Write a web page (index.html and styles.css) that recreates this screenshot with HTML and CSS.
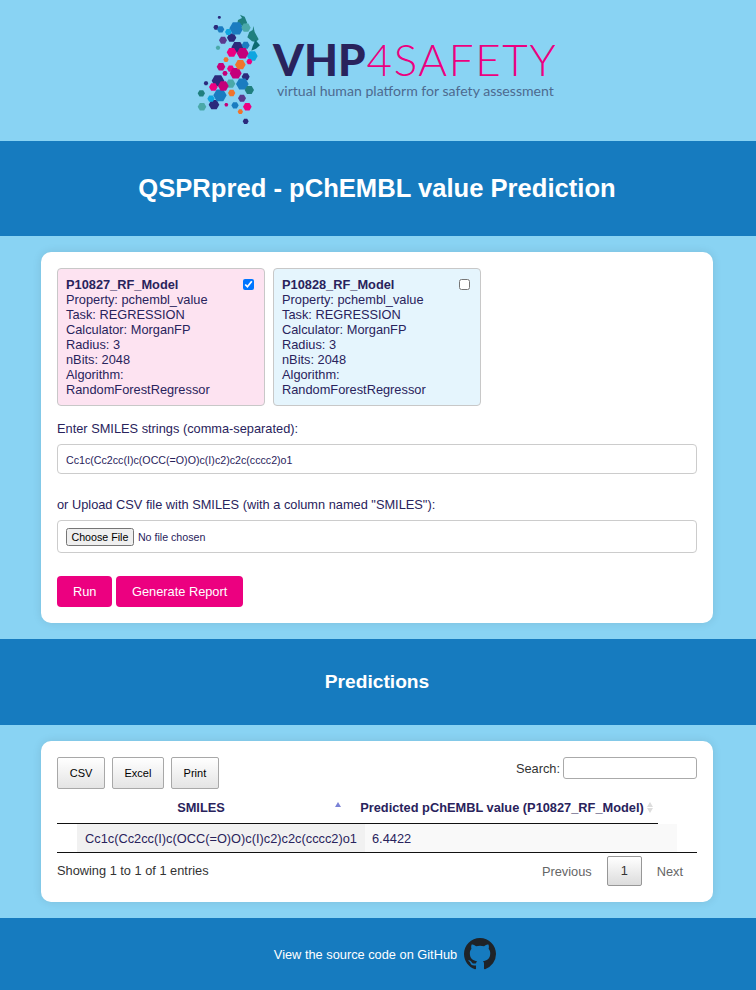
FILE: index.html
```html
<!DOCTYPE html>
<html lang="en">
<head>
  <meta charset="UTF-8">
  <meta name="viewport" content="width=device-width, initial-scale=1.0">
  <title>QSPRpred - pChEMBL value Prediction</title>
  <link rel="stylesheet" href="styles.css">
</head>
<body>
  <header class="logo-bar">
    <div class="logo">
      <svg class="logo-mark" viewBox="0 0 270 360" aria-hidden="true">
        <defs>
          <polygon id="hex" points="1,0 0.5,0.87 -0.5,0.87 -1,0 -0.5,-0.87 0.5,-0.87"/>
        </defs>
        <path fill="#1f7f7e" d="M150 14l14 6 8 20-14 8-16-8 2-10 12-6z"/>
        <path fill="#1f7f7e" d="M190 48l4 18 12 22-8 8-12-2-14-12 6-16 10-6z"/>
        <path fill="#0c6a70" d="M196 90l14 16-12 10-14 6 4-14z"/>
        <g fill="#2b2a7c">
          <use href="#hex" transform="translate(88 22) scale(5)"/>
          <use href="#hex" transform="translate(78 52) scale(8)"/>
          <use href="#hex" transform="translate(125 83) scale(14)"/>
          <use href="#hex" transform="translate(142 112) scale(18)"/>
          <use href="#hex" transform="translate(167 200) scale(12)"/>
          <use href="#hex" transform="translate(48 220) scale(7)"/>
          <use href="#hex" transform="translate(84 212) scale(19)"/>
          <use href="#hex" transform="translate(72 284) scale(16)"/>
          <use href="#hex" transform="translate(167 334) scale(9)"/>
        </g>
        <g fill="#1a7cc0">
          <use href="#hex" transform="translate(92 58) scale(11)"/>
          <use href="#hex" transform="translate(139 55) scale(21)"/>
          <use href="#hex" transform="translate(167 106) scale(12)"/>
          <use href="#hex" transform="translate(157 222) scale(19)"/>
          <use href="#hex" transform="translate(90 256) scale(20)"/>
          <use href="#hex" transform="translate(135 286) scale(11)"/>
        </g>
        <g fill="#4aa9a9">
          <use href="#hex" transform="translate(168 53) scale(14)"/>
          <use href="#hex" transform="translate(84 113) scale(7)"/>
          <use href="#hex" transform="translate(122 221) scale(14)"/>
          <use href="#hex" transform="translate(36 290) scale(13)"/>
        </g>
        <g fill="#1f7f7e">
          <use href="#hex" transform="translate(178 240) scale(14)"/>
          <use href="#hex" transform="translate(34 250) scale(11)"/>
        </g>
        <g fill="#0fa5e0">
          <use href="#hex" transform="translate(115 66) scale(10)"/>
          <use href="#hex" transform="translate(187 138) scale(16)"/>
          <use href="#hex" transform="translate(63 266) scale(11)"/>
        </g>
        <g fill="#5a3a8e">
          <use href="#hex" transform="translate(99 91) scale(12)"/>
          <use href="#hex" transform="translate(156 265) scale(12)"/>
        </g>
        <g fill="#ec0080">
          <use href="#hex" transform="translate(125 127) scale(15)"/>
          <use href="#hex" transform="translate(178 155) scale(9)"/>
          <use href="#hex" transform="translate(70 231) scale(13)"/>
          <use href="#hex" transform="translate(172 290) scale(13)"/>
          <use href="#hex" transform="translate(122 176) scale(11)"/>
        </g>
        <g fill="#c4007a">
          <use href="#hex" transform="translate(158 130) scale(18)"/>
          <use href="#hex" transform="translate(93 170) scale(13)"/>
          <use href="#hex" transform="translate(105 190) scale(8)"/>
          <use href="#hex" transform="translate(137 190) scale(18)"/>
          <use href="#hex" transform="translate(100 228) scale(16)"/>
          <use href="#hex" transform="translate(109 284) scale(6)"/>
        </g>
        <g fill="#f0742b">
          <use href="#hex" transform="translate(108 149) scale(8)"/>
          <use href="#hex" transform="translate(151 164) scale(16)"/>
          <use href="#hex" transform="translate(125 249) scale(11)"/>
          <use href="#hex" transform="translate(151 305) scale(8)"/>
        </g>
      </svg>
      <div class="logo-text">
        <div class="logo-name"><b>VHP</b><span class="logo-num">4SAFETY</span></div>
        <div class="logo-tagline">virtual human platform for safety assessment</div>
      </div>
    </div>
  </header>

  <section class="band band-title">
    <h1>QSPRpred - pChEMBL value Prediction</h1>
  </section>

  <main class="panel">
    <div class="models">
      <div class="model model-pink">
        <div class="model-head">
          <strong>P10827_RF_Model</strong>
          <input type="checkbox" checked>
        </div>
        <div>Property: pchembl_value</div>
        <div>Task: REGRESSION</div>
        <div>Calculator: MorganFP</div>
        <div>Radius: 3</div>
        <div>nBits: 2048</div>
        <div>Algorithm: RandomForestRegressor</div>
      </div>
      <div class="model model-blue">
        <div class="model-head">
          <strong>P10828_RF_Model</strong>
          <input type="checkbox">
        </div>
        <div>Property: pchembl_value</div>
        <div>Task: REGRESSION</div>
        <div>Calculator: MorganFP</div>
        <div>Radius: 3</div>
        <div>nBits: 2048</div>
        <div>Algorithm: RandomForestRegressor</div>
      </div>
    </div>

    <label class="field-label">Enter SMILES strings (comma-separated):</label>
    <input class="field field-text" type="text" value="Cc1c(Cc2cc(I)c(OCC(=O)O)c(I)c2)c2c(cccc2)o1">

    <label class="field-label field-label-second">or Upload CSV file with SMILES (with a column named "SMILES"):</label>
    <input class="field field-file" type="file">

    <div class="actions">
      <button class="btn-pink btn-run">Run</button>
      <button class="btn-pink btn-report">Generate Report</button>
    </div>
  </main>

  <section class="band band-sub">
    <h2>Predictions</h2>
  </section>

  <section class="panel panel-table">
    <div class="dt-top">
      <div class="dt-buttons">
        <button class="dt-btn">CSV</button>
        <button class="dt-btn">Excel</button>
        <button class="dt-btn">Print</button>
      </div>
      <label class="dt-search">Search: <input type="search"></label>
    </div>

    <div class="dt-head">
      <div class="th th-smiles">SMILES<span class="sort-up"></span></div>
      <div class="th th-value">Predicted pChEMBL value (P10827_RF_Model)<span class="sort-both"></span></div>
    </div>
    <div class="dt-body">
      <div class="td td-smiles">Cc1c(Cc2cc(I)c(OCC(=O)O)c(I)c2)c2c(cccc2)o1</div>
      <div class="td td-value">6.4422</div>
    </div>

    <div class="dt-bottom">
      <div class="dt-info">Showing 1 to 1 of 1 entries</div>
      <div class="dt-pages">
        <span class="page-link">Previous</span>
        <span class="page-current">1</span>
        <span class="page-link">Next</span>
      </div>
    </div>
  </section>

  <footer class="band band-footer">
    <span>View the source code on GitHub</span>
    <svg class="gh-icon" viewBox="0 0 16 16" aria-hidden="true">
      <path fill="#1f2328" d="M8 0C3.58 0 0 3.58 0 8c0 3.54 2.29 6.53 5.47 7.59.4.07.55-.17.55-.38 0-.19-.01-.82-.01-1.49-2.01.37-2.53-.49-2.69-.94-.09-.23-.48-.94-.82-1.13-.28-.15-.68-.52-.01-.53.63-.01 1.08.58 1.23.82.72 1.21 1.87.87 2.33.66.07-.52.28-.87.51-1.07-1.78-.2-3.64-.89-3.64-3.95 0-.87.31-1.59.82-2.15-.08-.2-.36-1.02.08-2.12 0 0 .67-.21 2.2.82.64-.18 1.32-.27 2-.27.68 0 1.36.09 2 .27 1.53-1.04 2.2-.82 2.2-.82.44 1.1.16 1.92.08 2.12.51.56.82 1.27.82 2.15 0 3.07-1.87 3.75-3.65 3.95.29.25.54.73.54 1.48 0 1.07-.01 1.93-.01 2.2 0 .21.15.46.55.38A8.013 8.013 0 0016 8c0-4.42-3.58-8-8-8z"/>
    </svg>
  </footer>
</body>
</html>
```

FILE: styles.css
```css
body {
  margin: 0;
  background-color: #89d3f3;
  color: #29235c;
  font-family: "Liberation Sans", Arial, sans-serif;
  font-size: 12.8px;
  line-height: 15px;
}

/* logo */
.logo-bar {
  height: 141px;
  display: flex;
  box-sizing: border-box;
  padding: 10px 0 0 190px;
}
.logo {
  display: flex;
  height: 120px;
}
.logo-mark {
  width: 90px;
  height: 120px;
  flex-shrink: 0;
}
.logo-text {
  padding: 26px 0 0 0;
  margin-left: -7px;
  font-family: Lato, sans-serif;
}
.logo-name {
  font-size: 44px;
  line-height: 46px;
  font-weight: 300;
  color: #ec0080;
  white-space: nowrap;
}
.logo-name b {
  font-weight: 900;
  color: #29235c;
}
.logo-num {
  margin-left: 1px;
  letter-spacing: 1.6px;
}
.logo-tagline {
  margin: 1px 0 0 4px;
  font-size: 14.1px;
  line-height: 16px;
  color: #4d6a8f;
  white-space: nowrap;
}

/* blue bands */
.band {
  background-color: #167bbf;
  color: #fff;
  text-align: center;
}
.band-title {
  height: 95px;
  box-sizing: border-box;
  padding: 0 2px 2px 0;
  display: flex;
  align-items: center;
  justify-content: center;
}
.band-title h1 {
  margin: 0;
  font-size: 25.6px;
  line-height: 30px;
}
.band-sub {
  height: 86px;
  box-sizing: border-box;
  padding-right: 2px;
  display: flex;
  align-items: center;
  justify-content: center;
}
.band-sub h2 {
  margin: 0;
  font-size: 19.2px;
  line-height: 22px;
}
.band-footer {
  height: 72px;
  display: flex;
  align-items: center;
  justify-content: center;
  gap: 7px;
  padding-left: 14px;
}
.gh-icon {
  width: 32px;
  height: 32px;
}

/* white panels */
.panel {
  width: 640px;
  margin: 16px 43px 16px 41px;
  padding: 16px;
  background-color: #fff;
  border-radius: 10px;
  box-shadow: 0 0 10px rgba(0, 0, 0, 0.1);
}

/* model cards */
.models {
  display: flex;
  gap: 8px;
}
.model {
  width: 190px;
  padding: 8px;
  border: 1px solid #c8c8c8;
  border-radius: 4px;
}
.model-pink { background-color: #fde3f1; }
.model-blue { background-color: #e5f5fd; }
.model-head {
  display: flex;
  justify-content: space-between;
  align-items: flex-start;
}
.model-head input {
  width: 11px;
  height: 11px;
  margin: 2px 2px 0 0;
}

/* form */
.field-label {
  display: block;
  margin-top: 15px;
}
.field-label-second {
  margin-top: 23px;
}
.field {
  display: block;
  width: 100%;
  box-sizing: border-box;
  margin-top: 8px;
  border: 1px solid #ccc;
  border-radius: 4px;
  font-family: "Liberation Sans", Arial, sans-serif;
  font-size: 10.67px;
  color: #29235c;
  background-color: #fff;
}
.field-text {
  height: 30px;
  padding: 9px 8px 7px;
}
.field-file {
  height: 33px;
  padding: 7px 8px 9px;
}
.field-file::file-selector-button {
  padding: 1px 3.5px;
}
.actions {
  display: flex;
  gap: 4px;
  margin-top: 23px;
}
.btn-pink {
  height: 31px;
  padding: 0 16px;
  border: 0;
  border-radius: 4px;
  background-color: #ec0080;
  color: #fff;
  font-family: "Liberation Sans", Arial, sans-serif;
  font-size: 12.8px;
}
.btn-report {
  padding: 0 15.5px;
}

/* data table */
.dt-top {
  display: flex;
  justify-content: space-between;
  align-items: flex-start;
}
.dt-buttons {
  display: flex;
  gap: 7px;
}
.dt-btn {
  min-width: 48px;
  height: 32px;
  padding: 0 11.5px;
  border: 1px solid #a8a8a8;
  border-radius: 2px;
  background: linear-gradient(to bottom, #fff, #e4e4e4);
  color: #000;
  font-family: "Liberation Sans", Arial, sans-serif;
  font-size: 11px;
}
.dt-search {
  display: flex;
  align-items: center;
  gap: 3px;
  color: #333;
}
.dt-search input {
  width: 134px;
  height: 22px;
  box-sizing: border-box;
  margin: 0;
  padding: 1px 5px;
  border: 1px solid #aaa;
  border-radius: 3px;
}
.dt-head {
  display: flex;
  width: 601px;
  height: 35px;
  box-sizing: border-box;
  border-bottom: 1px solid #111;
  font-weight: bold;
}
.th {
  position: relative;
  box-sizing: border-box;
  padding-top: 11px;
  text-align: center;
}
.th-smiles {
  width: 288px;
}
.th-value {
  width: 313px;
  padding-left: 1px;
}
.sort-up {
  position: absolute;
  top: 13px;
  right: 4.5px;
  width: 0;
  height: 0;
  border-left: 3.5px solid transparent;
  border-right: 3.5px solid transparent;
  border-bottom: 5px solid #7a82d6;
}
.sort-both {
  position: absolute;
  top: 13px;
  right: 5px;
  width: 0;
  height: 0;
  border-left: 3.5px solid transparent;
  border-right: 3.5px solid transparent;
  border-bottom: 5px solid #ddd;
}
.sort-both::after {
  content: "";
  position: absolute;
  top: 6px;
  left: -3.5px;
  width: 0;
  height: 0;
  border-left: 3.5px solid transparent;
  border-right: 3.5px solid transparent;
  border-top: 5px solid #ddd;
}
.dt-body {
  display: flex;
  padding: 0 20px;
  border-bottom: 1px solid #111;
}
.td {
  height: 28px;
  box-sizing: border-box;
  padding: 7px 8px 0;
}
.td-smiles {
  width: 288px;
  background-color: #f1f1f1;
}
.td-value {
  width: 312px;
  padding-left: 7px;
  background-color: #f9f9f9;
}
.dt-bottom {
  display: flex;
  justify-content: space-between;
  align-items: flex-start;
  margin-top: 3px;
}
.dt-info {
  padding-top: 7px;
  color: #333;
}
.dt-pages {
  display: flex;
  align-items: center;
  height: 30px;
  margin-right: 14px;
  gap: 15px;
}
.page-link {
  color: #666;
}
.page-current {
  width: 33px;
  height: 28px;
  border: 1px solid #979797;
  border-radius: 2px;
  background: linear-gradient(to bottom, #fff, #dcdcdc);
  color: #333;
  text-align: center;
  line-height: 28px;
}
```
